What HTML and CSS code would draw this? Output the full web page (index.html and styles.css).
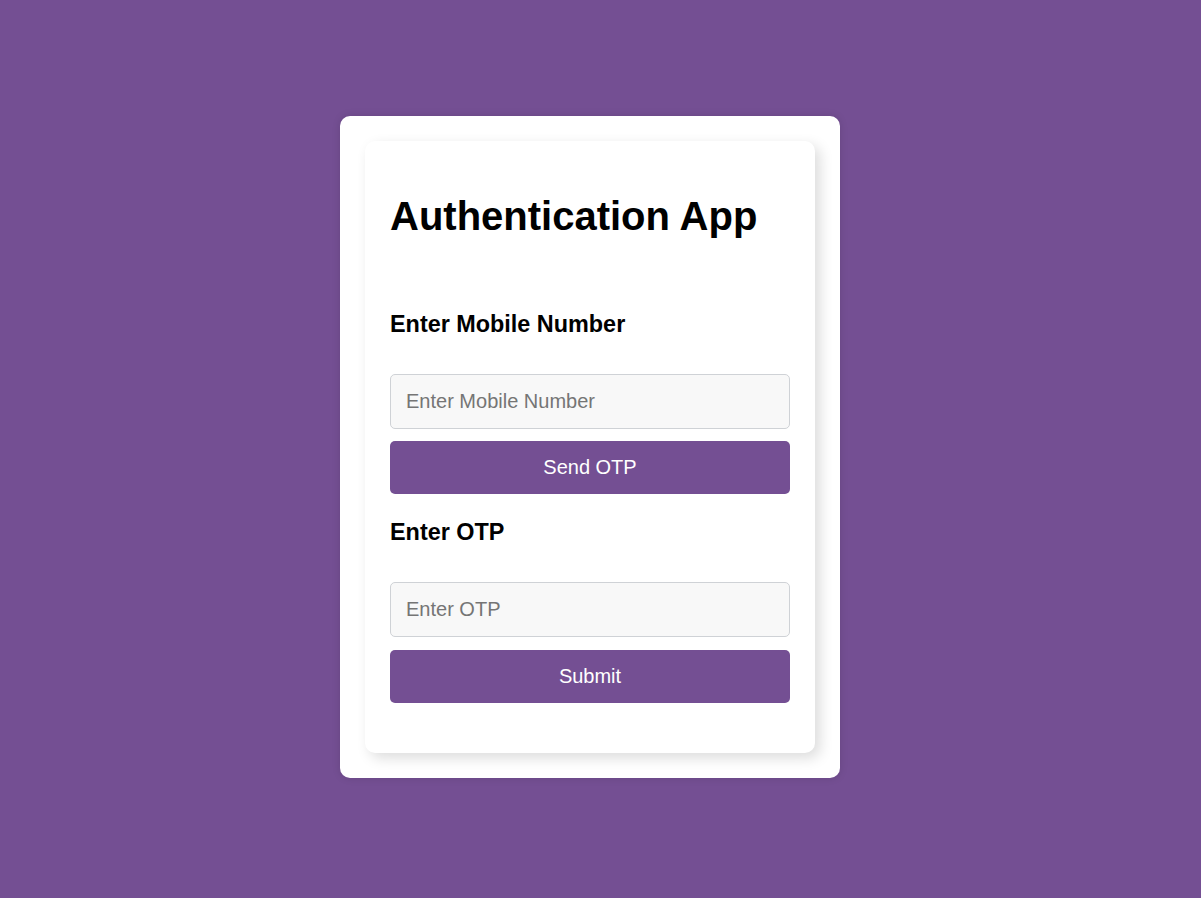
FILE: index.html
```html
<!DOCTYPE html>
<html lang="en">
<head>
<meta charset="UTF-8">
<title>Authentication App</title>
<link rel="stylesheet" href="styles.css">
</head>
<body>
  <div class="card">
    <div class="panel">
      <h1 class="title">Authentication App</h1>
      <div class="form">
        <h3 class="label">Enter Mobile Number</h3>
        <input class="field" type="text" placeholder="Enter Mobile Number">
        <button class="btn">Send OTP</button>
        <h3 class="label">Enter OTP</h3>
        <input class="field field-last" type="text" placeholder="Enter OTP">
        <button class="btn">Submit</button>
      </div>
    </div>
  </div>
</body>
</html>
```

FILE: styles.css
```css
* {
  box-sizing: border-box;
}

html, body {
  margin: 0;
  padding: 0;
}

body {
  background: #744f93;
  font-family: "Liberation Sans", Arial, sans-serif;
  min-height: 100vh;
  display: flex;
  align-items: center;
  justify-content: center;
  padding: 0 21px 4px 0;
}

.card {
  width: 500px;
  background: #ffffff;
  border-radius: 10px;
  padding: 25px;
  box-shadow: 0 0 8px rgba(0, 0, 0, 0.12);
}

.panel {
  background: #ffffff;
  border-radius: 10px;
  padding: 25px;
  box-shadow: 5px 5px 14px rgba(0, 0, 0, 0.14);
}

.title {
  margin: 27px 0 0;
  font-size: 40px;
  line-height: 46px;
  font-weight: bold;
  color: #000;
}

.form {
  display: flex;
  flex-direction: column;
  margin-top: 72px;
}

.label {
  margin: 0 0 36px;
  font-size: 23.4px;
  line-height: 27px;
  font-weight: bold;
  color: #000;
}

.field {
  display: block;
  width: 100%;
  height: 55px;
  padding: 0 15px;
  font-family: "Liberation Sans", Arial, sans-serif;
  font-size: 20px;
  background: #f8f8f8;
  border: 1px solid #cfd2d6;
  border-radius: 5px;
  margin: 0 0 12px;
  outline: none;
}

.field-last {
  margin-bottom: 13px;
}

.field::placeholder {
  color: #757575;
}

.btn {
  display: block;
  width: 100%;
  height: 53px;
  border: none;
  border-radius: 5px;
  background: #744f93;
  color: #ffffff;
  font-family: "Liberation Sans", Arial, sans-serif;
  font-size: 20px;
  margin: 0 0 25px;
  cursor: pointer;
}
```
